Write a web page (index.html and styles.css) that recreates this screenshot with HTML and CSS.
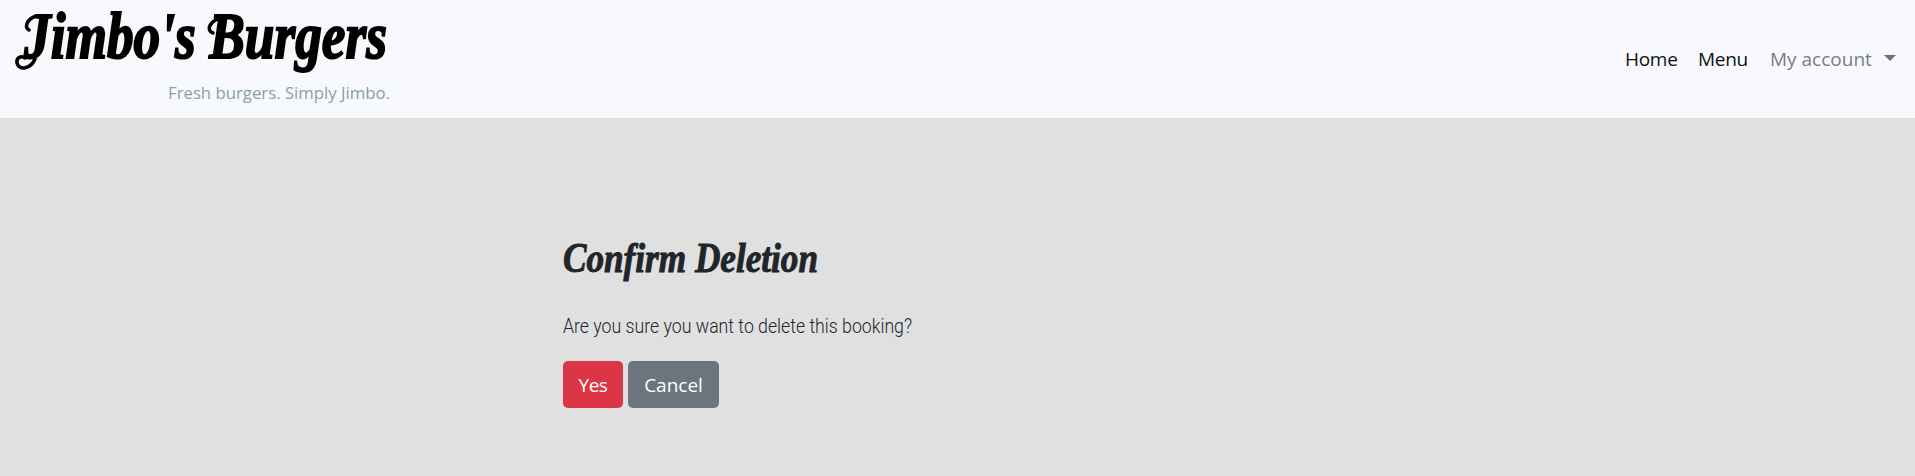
FILE: index.html
```html
<!DOCTYPE html>
<html lang="en">
<head>
<meta charset="utf-8">
<title>Jimbo's Burgers</title>
<link rel="stylesheet" href="styles.css">
</head>
<body>
<header class="navbar">
  <a class="brand">
    <svg width="400" height="117" viewBox="0 0 400 117" role="img" aria-label="Jimbo's Burgers">
      <path class="swash" d="M35 59C31 69 19 71 17 63C16 58 21 55 25 58M36 16C27 19 24 27 29 30M224 17C210 20 205 30 213 33"/>
      <text class="brand-name" x="24" y="58" textLength="363" lengthAdjust="spacingAndGlyphs">Jimbo's Burgers</text>
      <text class="brand-tag" x="168" y="98.500" textLength="222" lengthAdjust="spacingAndGlyphs">Fresh burgers. Simply Jimbo.</text>
    </svg>
  </a>
  <nav class="links">
    <a class="link home">Home</a>
    <a class="link menu">Menu</a>
    <a class="link account">My account<span class="caret"></span></a>
  </nav>
</header>
<main class="content">
  <h1 class="title">
    <svg width="300" height="70" viewBox="0 0 300 70"><text class="title-text" x="0" y="41" textLength="255" lengthAdjust="spacingAndGlyphs">Confirm Deletion</text></svg>
  </h1>
  <p class="question">
    <svg width="400" height="36" viewBox="0 0 400 36"><text class="question-text" x="0" y="23" textLength="349" lengthAdjust="spacingAndGlyphs">Are you sure you want to delete this booking?</text></svg>
  </p>
  <div class="actions">
    <button class="btn yes">Yes</button>
    <button class="btn cancel">Cancel</button>
  </div>
</main>
</body>
</html>
```
FILE: styles.css
```css
* { box-sizing: border-box; }
body {
  margin: 0;
  height: 476px;
  overflow: hidden;
  background: #e0e0e0;
  color: #212529;
  font-family: "Open Sans", "Noto Sans", sans-serif;
}
svg { display: block; overflow: visible; }
.navbar {
  display: flex;
  justify-content: space-between;
  height: 118px;
  background: #f8f9fc;
}
.brand-name {
  font: italic bold 65px "Liberation Serif", serif;
  fill: #000;
  stroke: #000;
  stroke-width: 2px;
}
.swash {
  fill: none;
  stroke: #000;
  stroke-width: 3.5px;
  stroke-linecap: round;
}
.brand-tag {
  font: 400 17px "Open Sans", sans-serif;
  fill: #8b9ea5;
}
.links {
  display: flex;
  padding: 46px 19px 0 0;
}
.link {
  display: flex;
  font-size: 19px;
  line-height: 26px;
  white-space: nowrap;
  color: #111;
}
.home { width: 73px; letter-spacing: -.3px; }
.menu { width: 72px; letter-spacing: -.3px; }
.account { width: 126px; color: #7b7c7e; }
.caret {
  flex: none;
  margin: 9px 0 0 12px;
  height: 6px;
  border: 6px solid transparent;
  border-top-color: #6f7072;
  border-bottom: 0;
}
.content { padding: 113px 0 0 563px; }
.title, .question { margin: 0; }
.title { height: 60px; }
.title-text {
  font: italic bold 43px "Liberation Serif", serif;
  fill: #212529;
  stroke: #212529;
  stroke-width: 1px;
}
.question { margin-top: 19px; height: 30px; }
.question-text { font: 300 20px Roboto, sans-serif; fill: #212529; }
.actions { display: flex; gap: 5px; margin-top: 21px; }
.btn {
  height: 47px;
  padding: 2px 0 0;
  border: 0;
  border-radius: 5px;
  color: #fff;
  font: 19px/45px "Open Sans", sans-serif;
}
.yes { width: 60px; background: #dc3545; letter-spacing: -.5px; }
.cancel { width: 91px; background: #6c757d; }
```
